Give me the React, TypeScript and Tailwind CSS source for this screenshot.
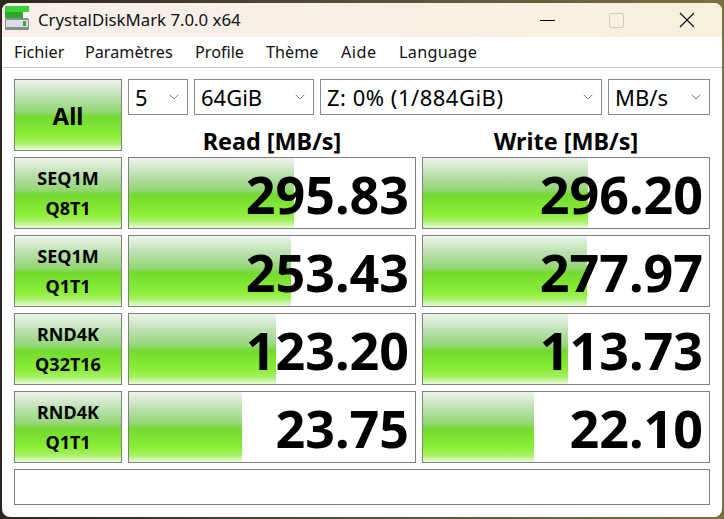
import React from 'react'
import { ChevronDown } from 'lucide-react'

const font = "font-['Noto_Sans','Open_Sans',sans-serif]"

const green =
  'bg-[linear-gradient(to_bottom,#eef4ec_0%,#b8dfac_25%,#94d674_46%,#72da30_52%,#8cee36_80%,#a8f068_90%,#e8fad8_100%)]'

const rows = [
  { top: 'SEQ1M', bottom: 'Q8T1', read: '295.83', readW: 165, write: '296.20', writeW: 165 },
  { top: 'SEQ1M', bottom: 'Q1T1', read: '253.43', readW: 162, write: '277.97', writeW: 164 },
  { top: 'RND4K', bottom: 'Q32T16', read: '123.20', readW: 147, write: '113.73', writeW: 145 },
  { top: 'RND4K', bottom: 'Q1T1', read: '23.75', readW: 113, write: '22.10', writeW: 111 },
]

function Combo({ label, className, textClass = '' }: { label: string; className: string; textClass?: string }) {
  return (
    <div className={`flex h-[36px] items-center justify-between border border-[#8a8a8a] bg-white pl-[6px] pr-[5px] ${className}`}>
      <span className={`text-[22px] leading-none text-black ${textClass}`}>{label}</span>
      <ChevronDown size={16} strokeWidth={1.2} className="text-[#666]" />
    </div>
  )
}

function Score({ value, width }: { value: string; width: number }) {
  return (
    <div className="relative h-[72px] w-[288px] border border-[#808080] bg-white">
      <div className={`absolute inset-y-0 left-0 ${green}`} style={{ width }} />
      <span className="relative block pr-[6px] text-right text-[52px] font-bold leading-[72px] text-black">{value}</span>
    </div>
  )
}

export default function App() {
  return (
    <div className={`h-[519px] w-[724px] overflow-hidden bg-[linear-gradient(to_right,#2c2520,#5a4e3c_50%,#7a7040)] pl-[2px] pr-[2px] pt-[3px] ${font}`}>
      <div className="h-[514px] w-[720px] overflow-hidden rounded-[8px] bg-white">
        {/* Title bar */}
        <div className="flex h-[34px] items-center bg-[linear-gradient(to_right,#f7efec,#f6f1dd)]">
          <svg width="24" height="24" viewBox="0 0 24 24" className="mb-[4px] ml-[3px]">
            <rect x="0" y="12" width="24" height="12" rx="1.5" fill="#858f88" />
            <rect x="1" y="14" width="22" height="7" fill="#d9dee6" />
            <rect x="18" y="15" width="3" height="5" fill="#3fa83a" />
            <rect x="0" y="0" width="24" height="6" fill="#3fd03a" />
            <rect x="0" y="6" width="18" height="6" fill="#2ea82c" />
          </svg>
          <span className="ml-[9px] text-[16.8px] text-[#111]">CrystalDiskMark 7.0.0 x64</span>
          <div className="ml-auto flex items-center">
            <div className="h-px w-[15px] bg-black" />
            <div className="ml-[54px] h-[15px] w-[15px] rounded-[2px] border border-[#cfcbc0]" />
            <svg width="16" height="16" viewBox="0 0 16 16" className="ml-[55px] mr-[27px]">
              <path d="M1 1 L15 15 M15 1 L1 15" stroke="#111" strokeWidth="1.2" />
            </svg>
          </div>
        </div>

        {/* Menu */}
        <div className="flex h-[31px] items-center border-b border-[#c8c8c8] pl-[12px] text-[16.2px] text-[#111]">
          <span className="w-[71px]">Fichier</span>
          <span className="w-[110px]">Paramètres</span>
          <span className="w-[71px]">Profile</span>
          <span className="w-[75px]">Thème</span>
          <span className="w-[58px] tracking-[0.5px]">Aide</span>
          <span className="tracking-[0.3px]">Language</span>
        </div>

        {/* Main panel */}
        <div className="flex flex-col gap-[6px] pl-[12px] pt-[11px]">
          <div className="flex gap-[6px]">
            <div className={`flex h-[72px] w-[108px] items-center justify-center border border-[#808080] pt-[2px] text-[24px] font-bold text-black ${green}`}>
              All
            </div>
            <div className="flex flex-col">
              <div className="flex gap-[6px]">
                <Combo label="5" className="w-[60px]" />
                <Combo label="64GiB" className="w-[120px]" />
                <Combo label="Z: 0% (1/884GiB)" className="w-[282px]" textClass="tracking-[0.5px]" />
                <Combo label="MB/s" className="w-[102px]" />
              </div>
              <div className="flex h-[36px] gap-[6px] text-center text-[23.4px] font-bold leading-[52px] text-black">
                <div className="w-[288px]">Read [MB/s]</div>
                <div className="w-[288px]">Write [MB/s]</div>
              </div>
            </div>
          </div>

          {rows.map((row, i) => (
            <div key={i} className="flex gap-[6px]">
              <div className={`flex h-[72px] w-[108px] flex-col items-center justify-center gap-[2px] border border-[#808080] text-[18px] font-bold leading-[28px] text-black ${green}`}>
                <span>{row.top}</span>
                <span>{row.bottom}</span>
              </div>
              <Score value={row.read} width={row.readW} />
              <Score value={row.write} width={row.writeW} />
            </div>
          ))}

          <div className="h-[36px] w-[696px] border border-[#808080] bg-white" />
        </div>
      </div>
    </div>
  )
}
